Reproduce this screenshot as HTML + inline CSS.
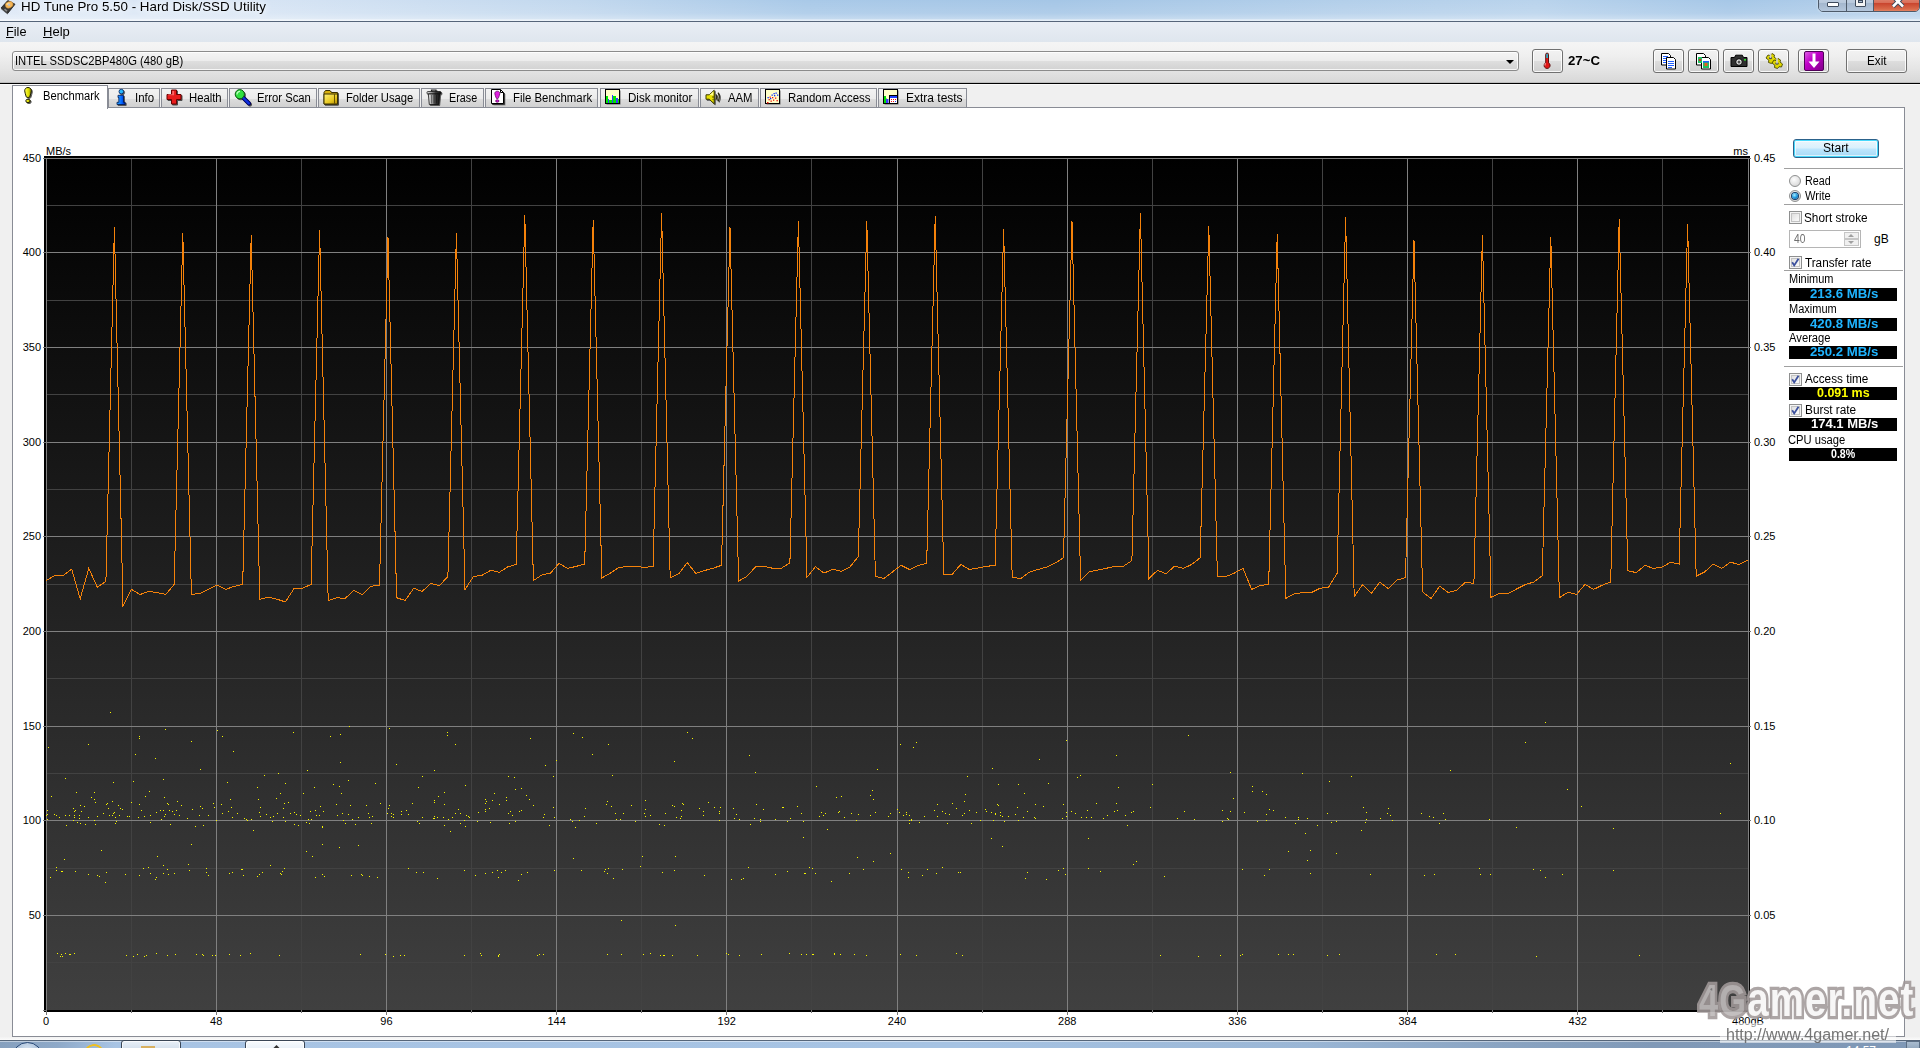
<!DOCTYPE html><html lang="en"><head><meta charset="utf-8"><title>HD Tune Pro 5.50 - Hard Disk/SSD Utility</title><style>
*{box-sizing:border-box}
html,body{margin:0;padding:0}
body{width:1920px;height:1048px;overflow:hidden;background:#f0f0f0;position:relative;
 font-family:"Liberation Sans","Noto Sans CJK JP",sans-serif;font-size:12px;color:#000}
.abs{position:absolute}
#title{left:0;top:0;width:1920px;height:22px;
 background:linear-gradient(90deg,#dde8f6 0,#d6e4f4 14%,#c2d8ee 30%,#a9c9e8 42%,#a5c6e6 55%,#b3cfea 70%,#b9d3ec 80%,#a6c7e7 90%,#b5d0eb 100%)}
#title .sh{left:0;top:0;width:1920px;height:22px;background:linear-gradient(180deg,rgba(255,255,255,.0) 0,rgba(255,255,255,.12) 60%,rgba(255,255,255,.35) 88%,rgba(255,255,255,.5) 100%)}
#title .ln{left:0;top:19px;width:1920px;height:3px;background:linear-gradient(180deg,rgba(255,255,255,.25) 0,rgba(255,255,255,.55) 66%,#56657a 67%,#56657a 100%)}
#title .tx{left:20.500px;top:-2px;font-size:13.500px;line-height:18px;white-space:nowrap;text-shadow:0 0 6px #fff,0 0 9px #fff}
#menu{left:0;top:22px;width:1920px;height:20px;background:linear-gradient(180deg,#e9eef5 0,#e3e9f1 55%,#dfe6ee 100%)}
#menu>span{position:absolute;top:2px;font-size:13px;line-height:16px}
#tool{left:0;top:42px;width:1920px;height:41px;background:linear-gradient(180deg,#f5f5f5 0,#f0f0f0 30%,#e5e5e5 65%,#d7d7d7 100%)}
#tline{left:0;top:82px;width:1920px;height:3px;background:linear-gradient(180deg,#bdbdbd 0,#bdbdbd 33.3%,#000 33.4%,#000 66.6%,#fafafa 66.7%,#fafafa 100%)}
.btn{position:absolute;border:1px solid #707070;border-radius:3px;background:linear-gradient(180deg,#f2f2f2 0,#ebebeb 48%,#dddddd 52%,#cfcfcf 100%);box-shadow:inset 0 0 0 1px rgba(255,255,255,.85)}
#combo{left:12px;top:51px;width:1507px;height:20px;border:1px solid #8b8b8b;border-radius:3px;background:linear-gradient(180deg,#f4f4f4 0,#ececec 48%,#dedede 52%,#d2d2d2 100%);box-shadow:inset 0 0 0 1px rgba(255,255,255,.8)}
#combo .tx{left:1.500px;top:2px;line-height:14px;white-space:nowrap;font-size:12.500px}
#combo .ar{left:1493px;top:8px;width:0;height:0;border-left:4px solid transparent;border-right:4px solid transparent;border-top:4px solid #000}
.tab{position:absolute;top:88px;height:20px;border:1px solid #898c95;border-bottom:none;background:linear-gradient(180deg,#f2f2f2 0,#ebebeb 50%,#dddddd 50%,#cfcfcf 100%);white-space:nowrap}
.tab.act{top:85px;height:24px;background:#fff;z-index:3}
.tab svg{position:absolute;left:4px;top:0px}
.tab.act svg{left:7px;top:1px}
.tab>span{position:absolute;top:1.500px;line-height:14px;font-size:12.500px}
.tab.act>span{top:3px}
#pane{left:12px;top:107px;width:1893px;height:930px;background:#fff;border:1px solid #898c95;z-index:1}
.z2{z-index:2}
</style></head><body>
<div id="title" class="abs"><div class="sh abs"></div><div class="ln abs"></div><svg width="17" height="15" viewBox="0 0 17 15" style="position:absolute;left:0;top:0"><path d="M1 8l6.800-7.500 7.200 3.700-7.300 9.300z" fill="#383838" stroke="#1c1c1c" stroke-width=".8"/><path d="M1 8l6.700 5.500v.9l-6.700-5.500z" fill="#555"/><ellipse cx="9.200" cy="4.800" rx="3.900" ry="3.100" fill="#f4b658" stroke="#c98a30" stroke-width=".6" transform="rotate(-22 9.200 4.800)"/><ellipse cx="8" cy="3.800" rx="1.800" ry="1.100" fill="#ffe0a0" opacity=".7" transform="rotate(-22 8 3.800)"/><circle cx="9.100" cy="4.800" r="1.100" fill="#b4c4dc"/><path d="M5 8.500l2.500 2-1 1.300-2.500-2z" fill="#8a8a8a"/></svg><div class="tx abs"><span id="ttl" style="display:inline-block;white-space:nowrap;transform-origin:0 50%;transform:scaleX(0.9896);">HD Tune Pro 5.50 - Hard Disk/SSD Utility</span></div><div class="abs" style="left:1818px;top:-8px;width:102px;height:20px;border:1px solid #4d5a6a;border-radius:0 0 5px 5px;overflow:hidden;box-shadow:0 0 2px rgba(255,255,255,.8)"><div class="abs" style="left:0;top:0;width:28px;height:19px;background:linear-gradient(180deg,#c9d6e6 0,#b9c9dc 50%,#a3b6cd 52%,#b6c8dd 100%);border-right:1px solid #4d5a6a"></div><div class="abs" style="left:28px;top:0;width:27px;height:19px;background:linear-gradient(180deg,#c9d6e6 0,#b9c9dc 50%,#a3b6cd 52%,#b6c8dd 100%);border-right:1px solid #4d5a6a"></div><div class="abs" style="left:55px;top:0;width:46px;height:19px;background:linear-gradient(180deg,#e8a08c 0,#d9705a 50%,#c8422c 52%,#d96a4a 85%,#e89070 100%)"></div><div class="abs" style="left:8px;top:9px;width:12px;height:5px;border:1px solid #3e4a5c;background:#fff;border-radius:1px"></div><div class="abs" style="left:36px;top:-2px;width:11px;height:16px;border:1px solid #3e4a5c;background:#f4f4f4;border-radius:1px"></div><div class="abs" style="left:39px;top:7px;width:5px;height:3px;border:1px solid #3e4a5c;background:#a9bbd0"></div><svg width="14" height="14" viewBox="0 0 14 14" style="position:absolute;left:72px;top:1px"><path d="M2 2.500l10 10M12 2.500l-10 10" fill="none" stroke="#3e4a5c" stroke-width="4.500"/><path d="M2 2.500l10 10M12 2.500l-10 10" fill="none" stroke="#fff" stroke-width="2.500"/></svg></div></div>
<div id="menu" class="abs"><span style="left:5.500px"><span id="mfile" style="display:inline-block;white-space:nowrap;transform-origin:0 50%;transform:scaleX(0.9776);"><u>F</u>ile</span></span><span style="left:42.500px"><span id="mhelp" style="display:inline-block;white-space:nowrap;transform-origin:0 50%;transform:scaleX(1.0019);"><u>H</u>elp</span></span></div>
<div id="tool" class="abs"></div><div id="tline" class="abs"></div>
<div id="combo" class="abs"><div class="tx abs"><span id="cbtxt" style="display:inline-block;white-space:nowrap;transform-origin:0 50%;transform:scaleX(0.8989);">INTEL SSDSC2BP480G (480 gB)</span></div><div class="ar abs"></div></div>
<div class="btn" style="left:1532px;top:49px;width:31px;height:24px"><svg width="20" height="20" viewBox="0 0 20 20" style="position:absolute;left:4px;top:1px"><path d="M8.700 3.500a1.400 1.400 0 0 1 2.800 0v8.300a3 3 0 1 1-2.800 0z" fill="#e01818" stroke="#500000" stroke-width=".9"/><path d="M9.200 3.500a.9.900 0 0 1 1.800 0v3.500h-1.800z" fill="#30a8c0"/><path d="M8 14.500a1.500 1.500 0 0 1 1-2" stroke="#ffb0b0" stroke-width="1" fill="none"/></svg></div>
<div class="abs" style="left:1568px;top:54px;font-weight:bold;font-size:12px;line-height:14px;"><span id="temp" style="display:inline-block;white-space:nowrap;transform-origin:0 50%;transform:scaleX(1.1023);">27~C</span></div>
<div class="btn" style="left:1653px;top:49px;width:31px;height:24px"><svg width="20" height="20" viewBox="0 0 20 20" style="position:absolute;left:5px;top:1px"><path d="M2.500 2.500h7l2 2v9.500h-9z" fill="#fff" stroke="#000" stroke-width="1"/><path d="M7.500 6.500h7l2 2v9.500h-9z" fill="#fff" stroke="#000" stroke-width="1"/><path d="M4 5.500h5M4 7.500h3M4 9.500h3M4 11.500h3M9 10.500h6M9 12.500h6M9 14.500h6M9 16.500h4" stroke="#2060ff" stroke-width="1"/></svg></div>
<div class="btn" style="left:1688px;top:49px;width:31px;height:24px"><svg width="20" height="20" viewBox="0 0 20 20" style="position:absolute;left:5px;top:1px"><path d="M2.500 2.500h7l2 2v9.500h-9z" fill="#fff" stroke="#000" stroke-width="1"/><path d="M7.500 6.500h7l2 2v9.500h-9z" fill="#fff" stroke="#000" stroke-width="1"/><rect x="4" y="6" width="4" height="6" fill="#20c060"/><rect x="5" y="8" width="2" height="2" fill="#e02020"/><rect x="9" y="10" width="6" height="7" fill="#20c060"/><rect x="10.500" y="12" width="3" height="3" fill="#e06020"/><rect x="9" y="10" width="6" height="1.500" fill="#2060ff"/></svg></div>
<div class="btn" style="left:1723px;top:49px;width:31px;height:24px"><svg width="20" height="20" viewBox="0 0 20 20" style="position:absolute;left:5px;top:0px"><path d="M2 7.500h3.500l1.200-2.300h6.600l1.200 2.300h3.500v9h-16z" fill="#303030" stroke="#000" stroke-width="1"/><circle cx="10" cy="12" r="3.300" fill="#e8e8e8" stroke="#000" stroke-width="1"/><circle cx="10" cy="12" r="1.500" fill="#505050"/><rect x="15" y="9" width="2" height="1.600" fill="#30e030"/></svg></div>
<div class="btn" style="left:1758px;top:49px;width:31px;height:24px"><svg width="20" height="20" viewBox="0 0 20 20" style="position:absolute;left:5px;top:1px"><g stroke="#4a4a00" stroke-width=".9" fill="#e0d800"><path d="M2 7l2-3 2 .5 2-2 2.500 1.500-.5 2 2.500 2-1 3-2.500-.3-1.500 1.800-3-1 .3-2.300z"/><path d="M8 12l2-3 2 .5 2-2 2.500 1.500-.5 2 2.500 2-1 3-2.500-.3-1.500 1.800-3-1 .3-2.300z"/></g><ellipse cx="6.500" cy="7" rx="1.700" ry="1.300" fill="#505050"/><ellipse cx="13" cy="12.500" rx="1.700" ry="1.300" fill="#505050"/><path d="M6.500 7V2.500M13 12.500V8" stroke="#d0d0d0" stroke-width="1.600"/></svg></div>
<div class="btn" style="left:1798px;top:49px;width:31px;height:24px"><svg width="20" height="20" viewBox="0 0 20 20" style="position:absolute;left:5px;top:1px"><defs><linearGradient id="gp" x1="0" y1="0" x2="1" y2="1"><stop offset="0" stop-color="#e060e8"/><stop offset=".4" stop-color="#c000c8"/><stop offset="1" stop-color="#800088"/></linearGradient></defs><rect x=".5" y=".5" width="19" height="19" rx="1.500" fill="url(#gp)" stroke="#500058" stroke-width="1"/><path d="M8.500 2.500h3v8h4l-5.500 6.500-5.500-6.500h4z" fill="#fff"/></svg></div>
<div class="btn" style="left:1846px;top:49px;width:61px;height:24px;text-align:center;line-height:22px;font-size:12px"><span style="position:absolute;left:20px;top:0"><span id="exit" style="display:inline-block;white-space:nowrap;transform-origin:0 50%;transform:scaleX(0.9792);">Exit</span></span></div>
<div class="tab act" style="left:12px;width:96px"><svg width="16" height="16" viewBox="0 0 16 16" style="filter:drop-shadow(1px 1px 0 rgba(0,0,0,.65));overflow:visible"><defs><linearGradient id="gy" x1="0" x2="1"><stop offset="0" stop-color="#ffff60"/><stop offset=".55" stop-color="#e2e200"/><stop offset="1" stop-color="#8a8a00"/></linearGradient></defs><path d="M8 .5c2.100 0 3.300 1.400 3.300 3.300 0 1.600-.8 3.300-1.300 5.200-.2.900-.5 1.400-2 1.400s-1.800-.5-2-1.400c-.5-1.900-1.300-3.600-1.300-5.200 0-1.900 1.200-3.300 3.300-3.300z" fill="url(#gy)" stroke="#1c1c00" stroke-width="1"/><ellipse cx="8" cy="13.900" rx="2.200" ry="1.700" fill="url(#gy)" stroke="#1c1c00" stroke-width="1"/></svg><span style="left:30.00px"><span id="tab0" style="display:inline-block;white-space:nowrap;transform-origin:0 50%;transform:scaleX(0.8935);">Benchmark</span></span></div>
<div class="tab" style="left:108px;width:52px"><svg width="16" height="16" viewBox="0 0 16 16" style="filter:drop-shadow(1px 1px 0 rgba(0,0,0,.65));overflow:visible"><defs><linearGradient id="gb" x1="0" x2="1"><stop offset="0" stop-color="#30b0ff"/><stop offset=".6" stop-color="#0060ff"/><stop offset="1" stop-color="#0020a0"/></linearGradient></defs><circle cx="8.3" cy="2.6" r="2.3" fill="#28b8ff" stroke="#002060" stroke-width=".8"/><path d="M5 6.300h5.500v7h1.700v2.200h-8.200v-2.200h1.800v-4.800h-.8z" fill="url(#gb)" stroke="#001850" stroke-width=".8"/></svg><span style="left:25.50px"><span id="tab1" style="display:inline-block;white-space:nowrap;transform-origin:0 50%;transform:scaleX(0.9157);">Info</span></span></div>
<div class="tab" style="left:161px;width:67px"><svg width="16" height="16" viewBox="0 0 16 16" style="filter:drop-shadow(1px 1px 0 rgba(0,0,0,.65));overflow:visible"><path d="M5.500 1h5v4.500h4.500v5h-4.500v4.500h-5v-4.500h-4.500v-5h4.500z" fill="#e81c1c" stroke="#6a0000" stroke-width="1"/><path d="M6.300 2h1.800v4.300h-5.800v-1h4z" fill="#ff7a7a" opacity=".8"/></svg><span style="left:27.10px"><span id="tab2" style="display:inline-block;white-space:nowrap;transform-origin:0 50%;transform:scaleX(0.9034);">Health</span></span></div>
<div class="tab" style="left:229px;width:88px"><svg width="16" height="16" viewBox="0 0 16 16" style="filter:drop-shadow(1px 1px 0 rgba(0,0,0,.65));overflow:visible"><path d="M9 8.500l6 6" stroke="#000060" stroke-width="4" stroke-linecap="round"/><path d="M9 8.500l5.800 5.800" stroke="#1030e0" stroke-width="2.400" stroke-linecap="round"/><circle cx="5.800" cy="5.200" r="4.600" fill="#30e040" stroke="#0a5a10" stroke-width="1"/><path d="M3 5.500a3 3 0 0 1 3-3.200" stroke="#c8ffc8" stroke-width="1.200" fill="none"/></svg><span style="left:27.25px"><span id="tab3" style="display:inline-block;white-space:nowrap;transform-origin:0 50%;transform:scaleX(0.9013);">Error Scan</span></span></div>
<div class="tab" style="left:318px;width:102px"><svg width="16" height="16" viewBox="0 0 16 16" style="filter:drop-shadow(1px 1px 0 rgba(0,0,0,.65));overflow:visible"><defs><linearGradient id="gf" x1="0" y1="0" x2="1" y2="1"><stop offset="0" stop-color="#fff27a"/><stop offset=".6" stop-color="#e8c820"/><stop offset="1" stop-color="#b08800"/></linearGradient></defs><path d="M1 15V3.500l1.500-2h4.500l1.500 2h6v11.500z" fill="#d8b010" stroke="#3a3000" stroke-width="1"/><path d="M1 15V5h10.500l3 0v10z" fill="url(#gf)" stroke="#3a3000" stroke-width="1"/><path d="M11.500 5v10" stroke="#6a5600" stroke-width="1"/></svg><span style="left:27.40px"><span id="tab4" style="display:inline-block;white-space:nowrap;transform-origin:0 50%;transform:scaleX(0.8954);">Folder Usage</span></span></div>
<div class="tab" style="left:421px;width:63px"><svg width="16" height="16" viewBox="0 0 16 16" style="filter:drop-shadow(1px 1px 0 rgba(0,0,0,.65));overflow:visible"><defs><linearGradient id="gt" x1="0" x2="1"><stop offset="0" stop-color="#f0f0f0"/><stop offset=".35" stop-color="#9a9a9a"/><stop offset=".6" stop-color="#404040"/><stop offset="1" stop-color="#101010"/></linearGradient></defs><path d="M5.500 2.800V1h4.500v1.800" fill="none" stroke="#202020" stroke-width="1.200"/><rect x="1" y="2.600" width="14" height="2.300" rx=".8" fill="url(#gt)" stroke="#101010" stroke-width=".8"/><path d="M2.300 5h11.400l-1 10.500h-9.400z" fill="url(#gt)" stroke="#101010" stroke-width=".8"/><path d="M5.500 6v8.500M8 6v8.500M10.500 6v8.500" stroke="#000" stroke-width=".7" opacity=".55"/></svg><span style="left:27.25px"><span id="tab5" style="display:inline-block;white-space:nowrap;transform-origin:0 50%;transform:scaleX(0.8620);">Erase</span></span></div>
<div class="tab" style="left:485px;width:113px"><svg width="16" height="16" viewBox="0 0 16 16" style="filter:drop-shadow(1px 1px 0 rgba(0,0,0,.65));overflow:visible"><path d="M2.500 15.500h12v-11l-3-3h-9z" fill="#000" opacity=".5"/><path d="M1.500 14.500h12v-11l-3-3h-9z" fill="#fff" stroke="#000" stroke-width="1"/><path d="M10.500 .5v3h3" fill="none" stroke="#000" stroke-width="1"/><path d="M7.300 2.200c1.700 0 2.500 1.100 2.500 2.400 0 1.300-.8 2.500-1.200 4-.2.700-.4 1-1.300 1s-1.100-.3-1.300-1c-.4-1.500-1.200-2.700-1.200-4 0-1.300.8-2.400 2.500-2.400z" fill="#e020e0" stroke="#500050" stroke-width=".7"/><ellipse cx="7.300" cy="12" rx="1.700" ry="1.200" fill="#e020e0" stroke="#500050" stroke-width=".7"/></svg><span style="left:27.25px"><span id="tab6" style="display:inline-block;white-space:nowrap;transform-origin:0 50%;transform:scaleX(0.9114);">File Benchmark</span></span></div>
<div class="tab" style="left:600px;width:99px"><svg width="16" height="16" viewBox="0 0 16 16" ><rect x="1.5" y="1.5" width="14" height="14" fill="#000" opacity=".55"/><rect x=".5" y=".5" width="14" height="14" fill="#ffffc8" stroke="#000"/><g shape-rendering="crispEdges"><path d="M1 14V7h2v7z M4 14v-3h3v3z M8 14V7h3v7z M13 14v-4h1v4z" fill="#00e800"/><path d="M3 14v-4h1v4z M7 14V6h1v8z M11 14V9h2v5z" fill="#3838ff"/></g></svg><span style="left:27.00px"><span id="tab7" style="display:inline-block;white-space:nowrap;transform-origin:0 50%;transform:scaleX(0.9270);">Disk monitor</span></span></div>
<div class="tab" style="left:700px;width:59px"><svg width="16" height="16" viewBox="0 0 16 16" style="filter:drop-shadow(1px 1px 0 rgba(0,0,0,.65));overflow:visible"><path d="M1 5.800h3.200l5-4.600v13.600l-5-4.600H1z" fill="#e8e000" stroke="#3a3a00" stroke-width="1"/><path d="M4.500 6l3.800-3.400v4z" fill="#ffff90"/><path d="M11 5.300q1.600 2.700 0 5.400M13 3.600q2.600 4.400 0 8.800" fill="none" stroke="#202000" stroke-width="1.100"/><circle cx="8" cy="8" r=".8" fill="#404000"/><circle cx="8" cy="10.500" r=".6" fill="#404000"/></svg><span style="left:27.25px"><span id="tab8" style="display:inline-block;white-space:nowrap;transform-origin:0 50%;transform:scaleX(0.9043);">AAM</span></span></div>
<div class="tab" style="left:760px;width:117px"><svg width="16" height="16" viewBox="0 0 16 16" ><rect x="1.5" y="1.5" width="14" height="14" fill="#000" opacity=".55"/><rect x=".5" y=".5" width="14" height="14" fill="#ffffc8" stroke="#000"/><g fill="#f01010"><rect x="2" y="13" width="1.500" height="1.500"/><rect x="3.500" y="10" width="1.300" height="1.300"/><rect x="5.500" y="11.500" width="1.300" height="1.300"/><rect x="8" y="10.500" width="1.300" height="1.300"/><rect x="10" y="8.500" width="1.300" height="1.300"/><rect x="11.500" y="11" width="1.300" height="1.300"/><rect x="7" y="8" width="1.300" height="1.300"/><rect x="4.500" y="7.500" width="1.300" height="1.300"/></g><g fill="#1030ff"><rect x="2.500" y="8" width="1.300" height="1.300"/><rect x="5" y="9" width="1.300" height="1.300"/><rect x="6.500" y="5.500" width="1.300" height="1.300"/><rect x="9" y="6" width="1.300" height="1.300"/><rect x="10.500" y="3.500" width="1.300" height="1.300"/><rect x="12" y="5.500" width="1.300" height="1.300"/><rect x="8.500" y="4" width="1.300" height="1.300"/></g></svg><span style="left:27.00px"><span id="tab9" style="display:inline-block;white-space:nowrap;transform-origin:0 50%;transform:scaleX(0.9133);">Random Access</span></span></div>
<div class="tab" style="left:878px;width:89px"><svg width="16" height="16" viewBox="0 0 16 16" ><rect x="1.5" y="1.5" width="14" height="14" fill="#000" opacity=".55"/><rect x=".5" y=".5" width="14" height="14" fill="#ffffc8" stroke="#000"/><path d="M1 14V7h2v2.500h1V14z" fill="#00e000"/><path d="M3 14v-4h2.500v4z" fill="#3838ff"/><rect x="6.500" y="6.500" width="8" height="8" fill="#fff" stroke="#000" stroke-width="1"/><rect x="7" y="7" width="7" height="2" fill="#2040ff"/><g fill="#f01010"><rect x="8" y="10" width="1" height="1"/><rect x="10" y="10" width="1" height="1"/><rect x="12" y="10" width="1" height="1"/><rect x="8" y="12" width="1" height="1"/><rect x="10" y="12" width="1" height="1"/></g><rect x="12" y="12" width="1" height="1" fill="#2040ff"/></svg><span style="left:27.40px"><span id="tab10" style="display:inline-block;white-space:nowrap;transform-origin:0 50%;transform:scaleX(0.9586);">Extra tests</span></span></div>
<div id="pane" class="abs"></div>
<div class="abs z2" style="left:0;top:0"><svg class="chart" width="1790" height="900" viewBox="0 140 1790 900" style="position:absolute;left:0;top:140px" shape-rendering="crispEdges">
<defs><linearGradient id="bg" x1="0" y1="0" x2="0" y2="1"><stop offset="0" stop-color="#000"/><stop offset="1" stop-color="#404040"/></linearGradient></defs>
<rect x="46" y="158" width="1703" height="852" fill="url(#bg)"/>
<path d="M46 205.5H1749M46 300.5H1749M46 394.5H1749M46 489.5H1749M46 584.5H1749M46 678.5H1749M46 773.5H1749M46 868.5H1749M46 962.5H1749M131.5 158V1010M301.5 158V1010M471.5 158V1010M641.5 158V1010M811.5 158V1010M982.5 158V1010M1152.5 158V1010M1322.5 158V1010M1492.5 158V1010M1662.5 158V1010" stroke="#424242" stroke-width="1" fill="none"/>
<path d="M46 158.5H1749M46 252.5H1749M46 347.5H1749M46 442.5H1749M46 536.5H1749M46 631.5H1749M46 726.5H1749M46 820.5H1749M46 915.5H1749M46 1010.5H1749M46.5 158V1010M216.5 158V1010M386.5 158V1010M556.5 158V1010M726.5 158V1010M897.5 158V1010M1067.5 158V1010M1237.5 158V1010M1407.5 158V1010M1577.5 158V1010M1748.5 158V1010" stroke="#808080" stroke-width="1" fill="none"/>
<path d="M199 815.5h1M300 815.5h1M73 808.5h1M79 815.5h1M247 820.5h1M343 820.5h1M319 815.5h1M452 817.5h1M114 812.5h1M131 802.5h1M348 814.5h1M74 817.5h1M368 813.5h1M260 807.5h1M422 817.5h1M294 824.5h1M391 813.5h1M244 818.5h1M118 805.5h1M408 814.5h1M460 813.5h1M320 806.5h1M444 825.5h1M74 815.5h1M352 819.5h1M228 811.5h1M56 815.5h1M73 820.5h1M107 803.5h1M84 806.5h1M306 822.5h1M177 801.5h1M216 820.5h1M129 816.5h1M156 812.5h1M47 814.5h1M221 804.5h1M290 813.5h1M366 805.5h1M460 823.5h1M231 807.5h1M75 810.5h1M144 816.5h1M46 815.5h1M94 799.5h1M337 815.5h1M165 814.5h1M448 819.5h1M266 814.5h1M208 815.5h1M438 796.5h1M296 814.5h1M303 793.5h1M455 813.5h1M169 810.5h1M298 825.5h1M202 808.5h1M450 831.5h1M433 818.5h1M214 807.5h1M59 817.5h1M499 804.5h1M490 822.5h1M150 815.5h1M139 804.5h1M444 804.5h1M355 824.5h1M477 821.5h1M401 811.5h1M203 825.5h1M506 800.5h1M389 805.5h1M106 804.5h1M115 823.5h1M510 811.5h1M108 808.5h1M506 797.5h1M251 819.5h1M437 817.5h1M160 810.5h1M168 804.5h1M213 803.5h1M322 827.5h1M283 808.5h1M294 812.5h1M47 819.5h1M127 816.5h1M200 806.5h1M309 823.5h1M163 810.5h1M412 803.5h1M478 812.5h1M336 804.5h1M260 816.5h1M272 821.5h1M492 800.5h1M311 819.5h1M103 813.5h1M80 805.5h1M417 821.5h1M119 815.5h1M464 820.5h1M150 822.5h1M515 821.5h1M122 809.5h1M138 817.5h1M388 808.5h1M54 814.5h1M341 793.5h1M419 823.5h1M95 802.5h1M174 814.5h1M246 819.5h1M116 821.5h1M316 815.5h1M372 816.5h1M80 823.5h1M85 824.5h1M77 822.5h1M308 819.5h1M172 811.5h1M97 816.5h1M69 815.5h1M406 810.5h1M283 817.5h1M164 816.5h1M393 814.5h1M489 808.5h1M434 800.5h1M232 817.5h1M371 823.5h1M380 803.5h1M237 813.5h1M79 818.5h1M167 803.5h1M458 809.5h1M179 815.5h1M120 808.5h1M170 824.5h1M161 819.5h1M192 809.5h1M270 817.5h1M141 810.5h1M88 817.5h1M65 815.5h1M323 811.5h1M401 814.5h1M230 799.5h1M512 815.5h1M66 825.5h1M468 816.5h1M112 801.5h1M285 821.5h1M322 826.5h1M369 817.5h1M109 815.5h1M95 824.5h1M342 813.5h1M277 813.5h1M284 803.5h1M358 817.5h1M81 811.5h1M391 816.5h1M280 793.5h1M273 816.5h1M350 805.5h1M115 817.5h1M315 810.5h1M74 811.5h1M366 805.5h1M290 813.5h1M469 817.5h1M509 823.5h1M434 818.5h1M259 812.5h1M145 796.5h1M113 813.5h1M434 816.5h1M466 815.5h1M276 798.5h1M47 810.5h1M112 815.5h1M195 826.5h1M443 817.5h1M485 811.5h1M222 813.5h1M519 811.5h1M176 810.5h1M94 820.5h1M164 797.5h1M288 802.5h1M465 826.5h1M345 823.5h1M387 813.5h1M393 817.5h1M181 805.5h1M485 809.5h1M187 818.5h1M508 813.5h1M310 811.5h1M125 874.5h1M475 875.5h1M281 874.5h1M518 880.5h1M259 874.5h1M88 874.5h1M208 875.5h1M168 874.5h1M315 877.5h1M241 869.5h1M242 869.5h1M206 872.5h1M75 871.5h1M105 882.5h1M284 868.5h1M148 867.5h1M174 873.5h1M257 876.5h1M498 877.5h1M56 867.5h1M61 871.5h1M270 865.5h1M324 876.5h1M485 873.5h1M437 878.5h1M163 865.5h1M97 875.5h1M369 876.5h1M492 872.5h1M408 868.5h1M262 872.5h1M416 872.5h1M156 877.5h1M189 870.5h1M106 872.5h1M377 877.5h1M99 876.5h1M322 874.5h1M229 873.5h1M50 877.5h1M188 864.5h1M351 875.5h1M464 870.5h1M163 873.5h1M501 872.5h1M56 870.5h1M282 871.5h1M167 869.5h1M362 875.5h1M62 871.5h1M206 868.5h1M139 875.5h1M423 872.5h1M143 868.5h1M505 870.5h1M155 879.5h1M150 873.5h1M497 870.5h1M280 873.5h1M243 875.5h1M361 874.5h1M232 872.5h1M146 955.5h1M70 954.5h1M74 953.5h1M464 955.5h1M393 956.5h1M202 954.5h1M133 956.5h1M61 954.5h1M360 954.5h1M203 955.5h1M126 955.5h1M212 955.5h1M498 956.5h1M144 956.5h1M215 955.5h1M250 953.5h1M69 954.5h1M481 955.5h1M137 954.5h1M60 956.5h1M240 955.5h1M65 953.5h1M62 956.5h1M167 955.5h1M400 955.5h1M175 954.5h1M499 954.5h1M385 954.5h1M196 954.5h1M404 955.5h1M480 953.5h1M57 953.5h1M156 953.5h1M498 955.5h1M229 954.5h1M279 955.5h1M485 799.5h1M396 764.5h1M333 784.5h1M217 730.5h1M139 738.5h1M76 792.5h1M200 769.5h1M514 777.5h1M91 797.5h1M257 787.5h1M340 762.5h1M447 732.5h1M444 792.5h1M222 736.5h1M163 779.5h1M465 785.5h1M233 751.5h1M155 758.5h1M515 789.5h1M434 770.5h1M65 778.5h1M135 754.5h1M486 801.5h1M258 799.5h1M494 793.5h1M339 786.5h1M113 782.5h1M330 736.5h1M51 796.5h1M133 781.5h1M422 776.5h1M94 792.5h1M348 780.5h1M375 783.5h1M191 741.5h1M314 787.5h1M455 744.5h1M139 736.5h1M48 747.5h1M434 802.5h1M264 775.5h1M307 770.5h1M88 744.5h1M285 783.5h1M293 732.5h1M278 773.5h1M139 804.5h1M508 776.5h1M485 803.5h1M340 734.5h1M418 787.5h1M447 735.5h1M149 791.5h1M227 782.5h1M389 728.5h1M312 856.5h1M64 859.5h1M101 850.5h1M306 851.5h1M191 844.5h1M322 844.5h1M358 845.5h1M253 830.5h1M339 847.5h1M157 856.5h1M995 813.5h1M585 808.5h1M782 807.5h1M544 814.5h1M570 819.5h1M553 807.5h1M750 824.5h1M1127 825.5h1M1017 807.5h1M1103 818.5h1M620 819.5h1M734 818.5h1M616 819.5h1M607 801.5h1M1081 817.5h1M714 807.5h1M631 805.5h1M1066 812.5h1M998 805.5h1M739 819.5h1M858 814.5h1M1125 815.5h1M760 819.5h1M872 790.5h1M986 811.5h1M549 825.5h1M674 806.5h1M924 816.5h1M521 810.5h1M783 807.5h1M1066 816.5h1M533 805.5h1M736 814.5h1M875 812.5h1M644 813.5h1M1091 817.5h1M611 806.5h1M997 804.5h1M681 810.5h1M733 808.5h1M790 818.5h1M1071 811.5h1M844 817.5h1M995 814.5h1M856 820.5h1M890 813.5h1M911 819.5h1M703 811.5h1M1062 818.5h1M1035 818.5h1M803 821.5h1M584 816.5h1M543 817.5h1M1035 804.5h1M682 803.5h1M839 811.5h1M911 820.5h1M529 799.5h1M664 825.5h1M719 820.5h1M720 807.5h1M942 811.5h1M1117 810.5h1M1043 806.5h1M962 815.5h1M899 812.5h1M1075 813.5h1M1086 817.5h1M606 804.5h1M906 814.5h1M969 810.5h1M1018 820.5h1M1063 804.5h1M1096 803.5h1M645 800.5h1M1015 814.5h1M1023 817.5h1M579 820.5h1M645 816.5h1M676 817.5h1M956 808.5h1M827 829.5h1M897 809.5h1M991 812.5h1M949 814.5h1M575 827.5h1M623 813.5h1M1116 803.5h1M819 816.5h1M821 812.5h1M1027 811.5h1M650 815.5h1M823 815.5h1M1000 815.5h1M1000 812.5h1M760 821.5h1M572 821.5h1M680 818.5h1M825 813.5h1M801 813.5h1M980 820.5h1M719 811.5h1M1034 817.5h1M787 821.5h1M873 799.5h1M665 813.5h1M703 815.5h1M615 813.5h1M719 813.5h1M635 821.5h1M964 813.5h1M754 818.5h1M1004 821.5h1M909 815.5h1M645 809.5h1M1002 816.5h1M825 813.5h1M888 816.5h1M971 823.5h1M976 812.5h1M659 824.5h1M947 823.5h1M934 810.5h1M903 815.5h1M775 819.5h1M672 805.5h1M797 806.5h1M1087 810.5h1M919 822.5h1M1114 811.5h1M851 813.5h1M836 797.5h1M870 815.5h1M909 823.5h1M838 812.5h1M937 816.5h1M985 809.5h1M554 817.5h1M763 809.5h1M945 813.5h1M681 816.5h1M841 796.5h1M1008 816.5h1M993 820.5h1M906 812.5h1M1107 815.5h1M909 820.5h1M699 808.5h1M596 823.5h1M683 804.5h1M674 870.5h1M521 874.5h1M960 872.5h1M704 875.5h1M812 868.5h1M922 875.5h1M741 879.5h1M554 870.5h1M1025 878.5h1M605 869.5h1M1027 872.5h1M527 872.5h1M1100 871.5h1M581 870.5h1M607 873.5h1M731 879.5h1M613 878.5h1M622 869.5h1M1063 868.5h1M927 869.5h1M1065 874.5h1M640 866.5h1M942 867.5h1M787 871.5h1M1058 870.5h1M662 872.5h1M604 871.5h1M804 873.5h1M608 868.5h1M849 873.5h1M1046 879.5h1M805 873.5h1M863 869.5h1M748 867.5h1M775 874.5h1M908 872.5h1M908 877.5h1M936 873.5h1M1088 868.5h1M831 881.5h1M815 873.5h1M958 872.5h1M901 869.5h1M743 878.5h1M809 867.5h1M621 954.5h1M728 954.5h1M916 955.5h1M660 955.5h1M761 954.5h1M650 953.5h1M834 954.5h1M900 954.5h1M663 955.5h1M801 954.5h1M539 954.5h1M866 955.5h1M543 954.5h1M664 955.5h1M962 955.5h1M812 954.5h1M956 953.5h1M813 954.5h1M854 954.5h1M806 954.5h1M840 954.5h1M739 955.5h1M607 954.5h1M537 955.5h1M834 953.5h1M697 955.5h1M789 953.5h1M643 954.5h1M672 955.5h1M726 953.5h1M553 776.5h1M592 754.5h1M1080 775.5h1M756 804.5h1M1118 787.5h1M582 737.5h1M612 775.5h1M937 804.5h1M573 733.5h1M530 738.5h1M967 776.5h1M992 768.5h1M965 794.5h1M952 803.5h1M674 761.5h1M526 795.5h1M1018 784.5h1M964 801.5h1M816 786.5h1M870 795.5h1M608 744.5h1M913 747.5h1M755 772.5h1M998 784.5h1M556 760.5h1M1024 793.5h1M1116 755.5h1M708 802.5h1M749 755.5h1M1066 740.5h1M521 788.5h1M877 769.5h1M545 765.5h1M1048 783.5h1M1039 759.5h1M1077 777.5h1M857 857.5h1M642 856.5h1M1088 838.5h1M890 853.5h1M803 837.5h1M675 856.5h1M1002 846.5h1M573 858.5h1M991 838.5h1M873 861.5h1M110 712.5h1M165 729.5h1M349 726.5h1M687 732.5h1M692 738.5h1M621 920.5h1M675 925.5h1M900 744.5h1M916 742.5h1M1131 812.5h1M1133 811.5h1M1150 807.5h1M1152 784.5h1M1136 861.5h1M1133 864.5h1M1164 876.5h1M1160 955.5h1M1177 818.5h1M1184 811.5h1M1188 735.5h1M1194 819.5h1M1198 956.5h1M1220 955.5h1M1222 810.5h1M1222 821.5h1M1227 818.5h1M1228 819.5h1M1230 811.5h1M1230 772.5h1M1233 798.5h1M1240 955.5h1M1242 954.5h1M1242 869.5h1M1244 812.5h1M1252 786.5h1M1252 791.5h1M1257 821.5h1M1262 791.5h1M1266 794.5h1M1266 814.5h1M1266 820.5h1M1264 875.5h1M1269 869.5h1M1269 809.5h1M1273 810.5h1M1278 954.5h1M1285 817.5h1M1288 851.5h1M1288 954.5h1M1293 954.5h1M1295 823.5h1M1298 817.5h1M1298 819.5h1M1302 773.5h1M1305 833.5h1M1307 818.5h1M1307 860.5h1M1310 850.5h1M1310 873.5h1M1317 825.5h1M1327 813.5h1M1327 955.5h1M1329 781.5h1M1331 822.5h1M1336 821.5h1M1336 853.5h1M1339 954.5h1M1351 776.5h1M1361 830.5h1M1363 807.5h1M1365 822.5h1M1366 812.5h1M1366 819.5h1M1370 874.5h1M1380 818.5h1M1387 813.5h1M1388 808.5h1M1390 815.5h1M1392 820.5h1M1421 813.5h1M1424 875.5h1M1429 816.5h1M1433 817.5h1M1434 874.5h1M1436 954.5h1M1439 823.5h1M1443 813.5h1M1445 819.5h1M1450 770.5h1M1455 954.5h1M1479 868.5h1M1480 874.5h1M1489 819.5h1M1490 874.5h1M1516 827.5h1M1525 742.5h1M1533 869.5h1M1536 956.5h1M1540 870.5h1M1545 722.5h1M1545 877.5h1M1562 874.5h1M1567 789.5h1M1581 806.5h1M1613 828.5h1M1613 870.5h1M1639 955.5h1M1720 813.5h1M1730 763.5h1" stroke="#f6f600" stroke-width="1" fill="none"/>
<polyline points="46.0,580.5 54.5,575.8 63.1,575.5 71.7,569.2 80.2,598.8 88.8,568.3 97.3,587.2 105.9,581.3 114.4,227.3 123.0,605.6 131.5,589.4 140.1,594.5 148.6,591.4 157.2,592.5 165.7,594.5 174.2,584.4 182.8,233.3 191.4,594.5 199.9,593.4 208.5,589.4 217.0,585.2 225.6,589.4 234.1,586.4 242.7,584.4 251.2,235.3 259.8,599.2 268.3,597.2 276.9,599.2 285.4,601.9 294.0,588.6 302.5,588.3 311.1,584.4 319.6,230.0 328.2,600.8 336.7,597.7 345.2,598.4 353.8,590.3 362.4,594.5 370.9,586.3 379.5,585.2 388.0,237.0 396.6,597.7 405.1,600.5 413.7,588.3 422.2,591.4 430.8,583.3 439.3,585.6 447.9,576.6 456.4,233.3 465.0,589.4 473.5,576.6 482.1,575.3 490.6,570.3 499.2,572.3 507.7,566.9 516.2,564.4 524.8,215.0 533.4,580.5 541.9,575.0 550.5,573.1 559.0,563.3 567.6,568.4 576.1,566.4 584.7,564.0 593.2,220.0 601.8,578.1 610.3,573.1 618.9,567.5 627.4,566.4 636.0,566.4 644.5,567.5 653.1,566.4 661.6,213.0 670.2,578.1 678.7,573.8 687.2,562.5 695.8,573.4 704.4,570.6 712.9,568.3 721.5,565.3 730.0,227.3 738.6,581.2 747.1,576.2 755.7,566.7 764.2,566.4 772.8,568.3 781.3,568.3 789.9,562.8 798.4,221.0 807.0,577.3 815.5,566.7 824.1,573.1 832.6,569.2 841.2,571.4 849.7,567.2 858.3,556.6 866.8,221.0 875.4,576.2 883.9,578.6 892.5,571.9 901.0,565.3 909.6,569.5 918.1,565.6 926.7,563.3 935.2,216.3 943.8,574.2 952.3,574.2 960.9,564.4 969.4,569.5 978.0,568.0 986.5,566.4 995.1,565.3 1003.6,229.0 1012.2,577.3 1020.7,578.6 1029.2,572.2 1037.8,569.5 1046.4,567.2 1054.9,563.3 1063.5,557.8 1072.0,221.0 1080.6,580.5 1089.1,571.9 1097.7,570.0 1106.2,568.3 1114.8,566.4 1123.3,566.4 1131.9,560.6 1140.4,213.0 1149.0,578.6 1157.5,570.3 1166.1,573.8 1174.6,566.1 1183.2,568.4 1191.7,564.5 1200.2,557.8 1208.8,226.0 1217.4,576.6 1225.9,576.6 1234.5,573.0 1243.0,568.3 1251.6,589.4 1260.1,585.6 1268.7,584.4 1277.2,234.0 1285.8,598.4 1294.3,593.8 1302.9,592.5 1311.4,592.5 1320.0,588.3 1328.5,587.2 1337.1,573.4 1345.6,217.0 1354.2,596.6 1362.7,584.4 1371.2,593.4 1379.8,582.3 1388.4,588.6 1396.9,580.0 1405.5,577.7 1414.0,240.0 1422.6,591.9 1431.1,598.4 1439.7,586.2 1448.2,592.5 1456.8,590.2 1465.3,582.3 1473.9,583.3 1482.4,235.0 1491.0,597.2 1499.5,593.4 1508.1,593.4 1516.6,589.0 1525.2,584.7 1533.7,582.0 1542.3,575.8 1550.8,237.0 1559.4,597.7 1567.9,592.2 1576.5,594.5 1585.0,584.4 1593.6,589.4 1602.1,585.2 1610.7,582.0 1619.2,219.0 1627.8,570.6 1636.3,572.7 1644.9,565.3 1653.4,568.4 1662.0,567.2 1670.5,562.2 1679.1,564.0 1687.6,224.3 1696.2,576.2 1704.7,571.9 1713.3,564.0 1721.8,568.4 1730.4,562.2 1738.9,564.4 1747.5,560.2" fill="none" stroke="#f5820a" stroke-width="1" stroke-linejoin="miter"/>
<rect x="44" y="156" width="2" height="856" fill="#000"/>
<rect x="44" y="156" width="1706" height="2" fill="#000"/>
<rect x="44" y="1010" width="1706" height="2" fill="#000"/>
<rect x="1749" y="156" width="1" height="856" fill="#000"/>
<path d="M43 158.5h3M1749 158.5h2M43 252.5h3M1749 252.5h2M43 347.5h3M1749 347.5h2M43 442.5h3M1749 442.5h2M43 536.5h3M1749 536.5h2M43 631.5h3M1749 631.5h2M43 726.5h3M1749 726.5h2M43 820.5h3M1749 820.5h2M43 915.5h3M1749 915.5h2M43 1010.5h3M1749 1010.5h2M46.5 1010v5M131.5 1010v3M216.5 1010v5M301.5 1010v3M386.5 1010v5M471.5 1010v3M556.5 1010v5M641.5 1010v3M726.5 1010v5M811.5 1010v3M897.5 1010v5M982.5 1010v3M1067.5 1010v5M1152.5 1010v3M1237.5 1010v5M1322.5 1010v3M1407.5 1010v5M1492.5 1010v3M1577.5 1010v5M1662.5 1010v3M1748.5 1010v5" stroke="#777" stroke-width="1" fill="none"/>
<g font-family="Liberation Sans, Arial, sans-serif" font-size="11px" fill="#000" shape-rendering="auto">
<text x="41" y="162.0" text-anchor="end">450</text>
<text x="41" y="256.0" text-anchor="end">400</text>
<text x="41" y="351.0" text-anchor="end">350</text>
<text x="41" y="446.0" text-anchor="end">300</text>
<text x="41" y="540.0" text-anchor="end">250</text>
<text x="41" y="635.0" text-anchor="end">200</text>
<text x="41" y="730.0" text-anchor="end">150</text>
<text x="41" y="824.0" text-anchor="end">100</text>
<text x="41" y="919.0" text-anchor="end">50</text>
<text x="1754" y="162.0">0.45</text>
<text x="1754" y="256.0">0.40</text>
<text x="1754" y="351.0">0.35</text>
<text x="1754" y="446.0">0.30</text>
<text x="1754" y="540.0">0.25</text>
<text x="1754" y="635.0">0.20</text>
<text x="1754" y="730.0">0.15</text>
<text x="1754" y="824.0">0.10</text>
<text x="1754" y="919.0">0.05</text>
<text x="46.0" y="1025" text-anchor="middle">0</text>
<text x="216.2" y="1025" text-anchor="middle">48</text>
<text x="386.4" y="1025" text-anchor="middle">96</text>
<text x="556.6" y="1025" text-anchor="middle">144</text>
<text x="726.8" y="1025" text-anchor="middle">192</text>
<text x="897.0" y="1025" text-anchor="middle">240</text>
<text x="1067.2" y="1025" text-anchor="middle">288</text>
<text x="1237.4" y="1025" text-anchor="middle">336</text>
<text x="1407.6" y="1025" text-anchor="middle">384</text>
<text x="1577.8" y="1025" text-anchor="middle">432</text>
<text x="1748" y="1025" text-anchor="middle">480gB</text>
<text x="46" y="155">MB/s</text>
<text x="1748" y="155" text-anchor="end">ms</text>
</g></svg></div>
<style>.sd{position:absolute;z-index:2;white-space:nowrap;font-size:12px;line-height:14px}.sep{position:absolute;z-index:2;left:1784px;width:119px;height:1px;background:#a0a0a0}.vb{position:absolute;z-index:2;left:1789px;width:108px;height:13px;background:#000;font-weight:bold;font-size:12px;line-height:12px;white-space:nowrap}.cb{position:absolute;z-index:2;left:1789px;width:13px;height:13px;border:1px solid #8e8f8f;background:linear-gradient(135deg,#d8d8d8,#f6f6f6 70%);box-shadow:inset 0 0 0 1px #f4f4f4, inset 0 0 0 2px #c3c3c3}.cb.dis{background:#f0f0f0}.rd{position:absolute;z-index:2;left:1789px;width:12px;height:12px;border-radius:50%;border:1px solid #8e8f8f;background:radial-gradient(circle at 40% 35%,#fdfdfd 0,#e4e4e4 55%,#c8c8c8 100%)}</style>
<div class="sd" style="left:1793px;top:139px;width:86px;height:19px;border:1px solid #2c628b;border-radius:3px;background:linear-gradient(180deg,#eaf6fd 0,#d9f0fc 48%,#bee6fd 52%,#a7d9f5 100%);box-shadow:inset 0 0 0 1px #48d8fb, inset 0 0 0 2px rgba(255,255,255,.6);text-align:center;line-height:16px"><span style="position:absolute;left:28.5px;top:0"><span id="start" style="display:inline-block;white-space:nowrap;transform-origin:0 50%;transform:scaleX(1.0141);">Start</span></span></div>
<div class="sep" style="top:168px"></div>
<div class="sep" style="top:204px"></div>
<div class="sep" style="top:270px"></div>
<div class="sep" style="top:366px"></div>
<div class="rd" style="top:175px"></div><div class="sd" style="left:1805px;top:174px"><span id="read" style="display:inline-block;white-space:nowrap;transform-origin:0 50%;transform:scaleX(0.8959);">Read</span></div>
<div class="rd" style="top:190px"><div style="position:absolute;left:2px;top:2px;width:6px;height:6px;border-radius:50%;box-shadow:0 0 0 1px #163c66;background:radial-gradient(circle at 40% 35%,#a8ecff 0,#1d9ae0 50%,#0b4a90 100%)"></div></div><div class="sd" style="left:1805px;top:188.5px"><span id="write" style="display:inline-block;white-space:nowrap;transform-origin:0 50%;transform:scaleX(0.9251);">Write</span></div>
<div class="cb" style="top:211px"></div><div class="sd" style="left:1804.2px;top:211px"><span id="short" style="display:inline-block;white-space:nowrap;transform-origin:0 50%;transform:scaleX(0.9830);">Short stroke</span></div>
<div class="sd" style="left:1789px;top:230px;width:72px;height:18px;border:1px solid #b5b5b5;background:#fff"><span style="position:absolute;left:3.500px;top:2px;color:#6f6f6f;font-size:12px;line-height:13px"><span id="n40" style="display:inline-block;white-space:nowrap;transform-origin:0 50%;transform:scaleX(0.8533);">40</span></span><div style="position:absolute;right:1px;top:1px;width:15px;height:7px;border:1px solid #c6c6c6;background:#f0f0f0"></div><div style="position:absolute;right:1px;top:8px;width:15px;height:7px;border:1px solid #c6c6c6;background:#f0f0f0"></div><div style="position:absolute;right:6px;top:3px;width:0;height:0;border-left:3px solid transparent;border-right:3px solid transparent;border-bottom:3px solid #a0a0a0"></div><div style="position:absolute;right:6px;top:10px;width:0;height:0;border-left:3px solid transparent;border-right:3px solid transparent;border-top:3px solid #a0a0a0"></div></div>
<div class="sd" style="left:1874px;top:232px"><span id="gb" style="display:inline-block;white-space:nowrap;transform-origin:0 50%;transform:scaleX(1.0000);">gB</span></div>
<div class="cb" style="top:256px"><svg width="11" height="11" viewBox="0 0 11 11" style="position:absolute;left:0;top:0"><path d="M2.200 5.200l2 3.200 4.300-6.600" fill="none" stroke="#3a4f9c" stroke-width="1.800"/></svg></div><div class="sd" style="left:1805px;top:256px"><span id="transfer" style="display:inline-block;white-space:nowrap;transform-origin:0 50%;transform:scaleX(0.9758);">Transfer rate</span></div>
<div class="sd" style="left:1789.3px;top:271.5px"><span id="minimum" style="display:inline-block;white-space:nowrap;transform-origin:0 50%;transform:scaleX(0.9143);">Minimum</span></div>
<div class="vb" style="top:288px;color:#1fb4ff"><span style="position:absolute;left:20.5px;top:0"><span id="v1" style="display:inline-block;white-space:nowrap;transform-origin:0 50%;transform:scaleX(1.1024);">213.6 MB/s</span></span></div>
<div class="sd" style="left:1789.1px;top:302px"><span id="maximum" style="display:inline-block;white-space:nowrap;transform-origin:0 50%;transform:scaleX(0.9170);">Maximum</span></div>
<div class="vb" style="top:318px;color:#1fb4ff"><span style="position:absolute;left:20.5px;top:0"><span id="v2" style="display:inline-block;white-space:nowrap;transform-origin:0 50%;transform:scaleX(1.1024);">420.8 MB/s</span></span></div>
<div class="sd" style="left:1789.1px;top:331px"><span id="average" style="display:inline-block;white-space:nowrap;transform-origin:0 50%;transform:scaleX(0.9352);">Average</span></div>
<div class="vb" style="top:346px;color:#1fb4ff"><span style="position:absolute;left:20.5px;top:0"><span id="v3" style="display:inline-block;white-space:nowrap;transform-origin:0 50%;transform:scaleX(1.1024);">250.2 MB/s</span></span></div>
<div class="cb" style="top:373px"><svg width="11" height="11" viewBox="0 0 11 11" style="position:absolute;left:0;top:0"><path d="M2.200 5.200l2 3.200 4.300-6.600" fill="none" stroke="#3a4f9c" stroke-width="1.800"/></svg></div><div class="sd" style="left:1805.3px;top:372px"><span id="access" style="display:inline-block;white-space:nowrap;transform-origin:0 50%;transform:scaleX(0.9801);">Access time</span></div>
<div class="vb" style="top:387px;color:#ffff00"><span style="position:absolute;left:28.1px;top:0"><span id="v4" style="display:inline-block;white-space:nowrap;transform-origin:0 50%;transform:scaleX(1.0371);">0.091 ms</span></span></div>
<div class="cb" style="top:404px"><svg width="11" height="11" viewBox="0 0 11 11" style="position:absolute;left:0;top:0"><path d="M2.200 5.200l2 3.200 4.300-6.600" fill="none" stroke="#3a4f9c" stroke-width="1.800"/></svg></div><div class="sd" style="left:1805.3px;top:403px"><span id="burst" style="display:inline-block;white-space:nowrap;transform-origin:0 50%;transform:scaleX(0.9840);">Burst rate</span></div>
<div class="vb" style="top:418px;color:#fff"><span style="position:absolute;left:21.6px;top:0"><span id="v5" style="display:inline-block;white-space:nowrap;transform-origin:0 50%;transform:scaleX(1.0847);">174.1 MB/s</span></span></div>
<div class="sd" style="left:1788.1px;top:432.5px"><span id="cpu" style="display:inline-block;white-space:nowrap;transform-origin:0 50%;transform:scaleX(0.9336);">CPU usage</span></div>
<div class="vb" style="top:448px;color:#fff"><span style="position:absolute;left:42.1px;top:0"><span id="v6" style="display:inline-block;white-space:nowrap;transform-origin:0 50%;transform:scaleX(0.8845);">0.8%</span></span></div>
<div class="abs" style="left:0;top:1040px;width:1920px;height:8px;z-index:4;background:linear-gradient(90deg,#86a0be 0,#8ea9c8 3%,#a8c4e4 6%,#a6c3e3 50%,#9ab6d5 68%,#8aa4c2 78%,#8099b7 86%,#7f98b6 100%)"><div class="abs" style="left:0;top:-3px;width:1920px;height:3px;background:linear-gradient(180deg,#f2f2f2,#fbfbfb)"></div><div class="abs" style="left:0;top:0;width:1920px;height:1px;background:#56667a"></div><div class="abs" style="left:0;top:1px;width:1920px;height:1px;background:rgba(255,255,255,.45)"></div><div class="abs" style="left:12px;top:2px;width:31px;height:31px;border-radius:50%;border:1px solid #2a4a78;background:radial-gradient(circle at 50% 30%,#dfeaf6,#9db6d2 60%,#5f83b0)"></div><div class="abs" style="left:84px;top:3.500px;width:20px;height:20px;border-radius:50%;border:2px solid #f0c020;border-left-color:#3a8ae0;border-bottom-color:#3a8ae0;transform:rotate(-20deg)"></div><div class="abs" style="left:121px;top:0px;width:60px;height:12px;border:1px solid #3a4656;border-radius:3px;background:linear-gradient(180deg,#e8f0f8,#cfdcea);box-shadow:inset 0 0 0 1px rgba(255,255,255,.7)"><div class="abs" style="left:19px;top:5px;width:14px;height:6px;background:#d8b060"></div></div><div class="abs" style="left:245px;top:0px;width:60px;height:12px;border:1px solid #3a4656;border-radius:3px;background:linear-gradient(180deg,#f8fbfe,#e6eef6);box-shadow:inset 0 0 0 1px rgba(255,255,255,.9)"><div class="abs" style="left:28px;top:5px;width:5px;height:5px;background:#303030;transform:rotate(45deg)"></div></div><div class="abs" style="left:1906px;top:1px;width:14px;height:10px;border:1px solid #5c6f85;background:linear-gradient(180deg,#a9bccf,#8ea3ba)"></div><div class="abs" style="left:1846px;top:5px;color:#fff;font-size:12px;line-height:12px;white-space:nowrap">14:57</div></div>
<div class="abs" style="left:1720px;top:1023px;width:176px;height:20px;background:rgba(255,255,255,.55);z-index:5"></div><div class="abs" style="left:1698.500px;top:973.700px;z-index:6;white-space:nowrap;font-family:'Liberation Sans',sans-serif;font-weight:bold;font-size:49px;line-height:50px;-webkit-text-stroke:6.500px rgba(160,152,152,.88);paint-order:stroke fill"><span id="wm" style="display:inline-block;white-space:nowrap;transform-origin:0 50%;transform:scaleX(0.7829);letter-spacing:1.500px"><span style="font-size:44px;color:rgba(245,245,245,.32)">4G</span><span style="color:rgba(250,250,250,.96)">amer.net</span></span></div><div class="abs" style="left:1725.500px;top:1024.500px;z-index:6;white-space:nowrap;font-size:16px;line-height:20px;color:rgba(105,105,105,.92)"><span id="wmurl" style="display:inline-block;white-space:nowrap;transform-origin:0 50%;transform:scaleX(1.0015);">http://www.4gamer.net/</span></div>
</body></html>
